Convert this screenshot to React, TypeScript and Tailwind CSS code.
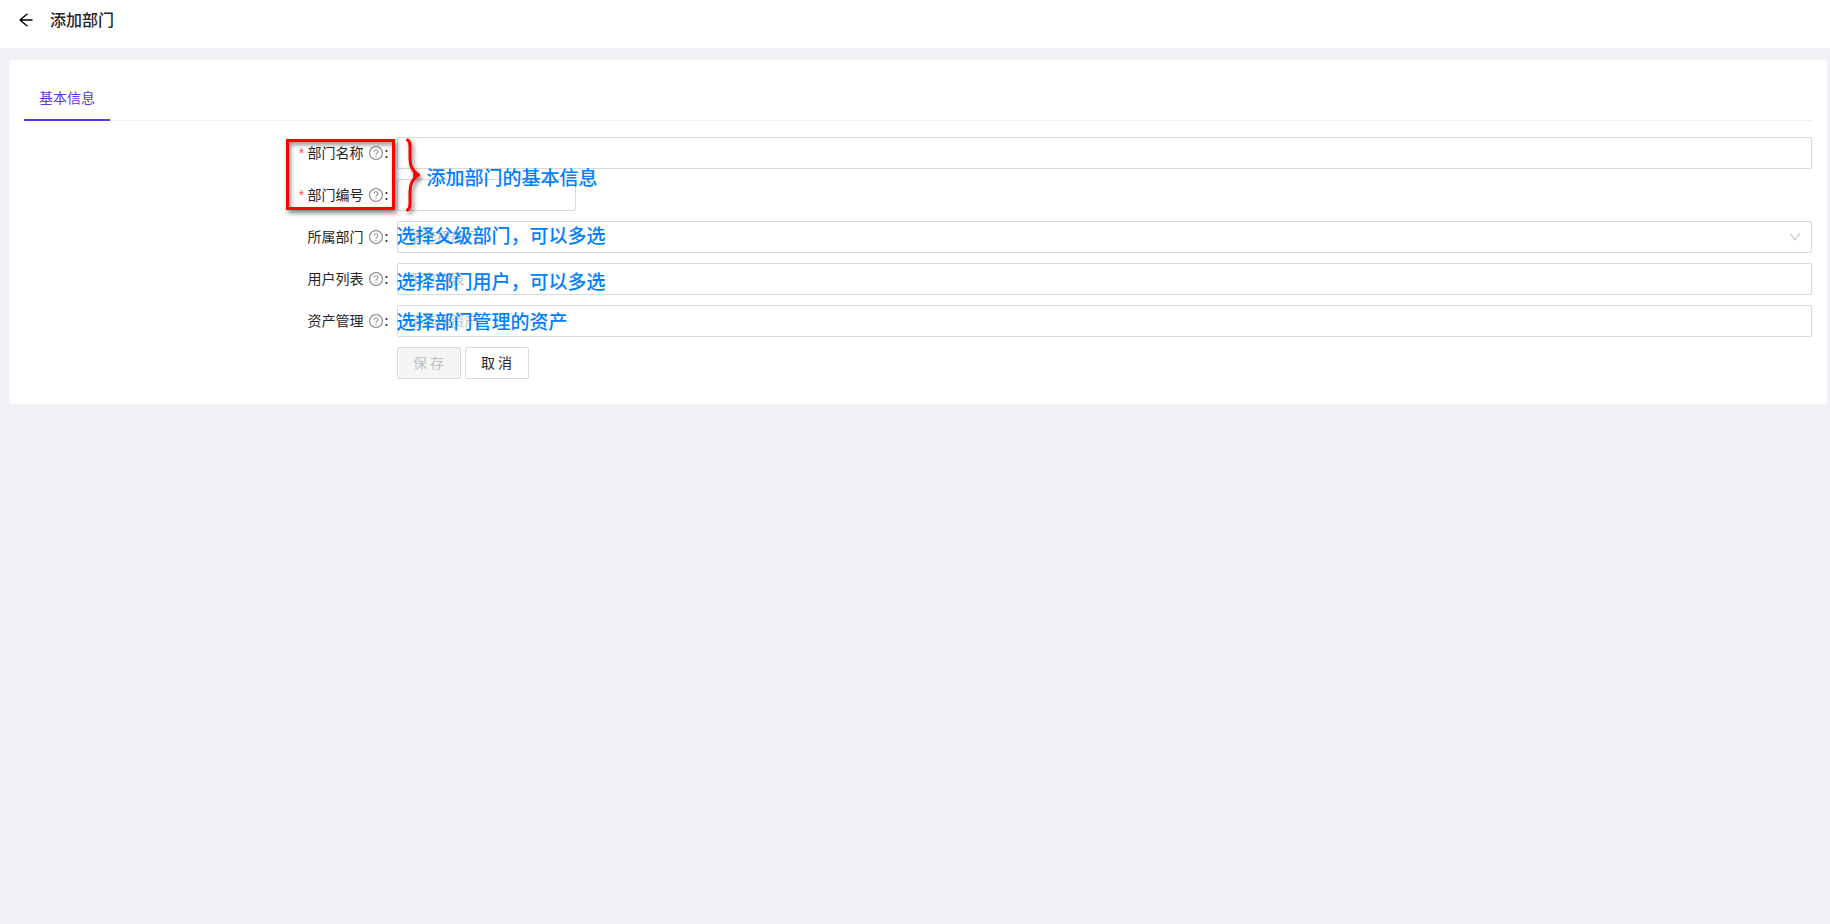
import type { ReactNode } from "react";

const HelpIcon = () => (
  <svg className="size-3.5 text-[#8c8c8c]" viewBox="64 64 896 896" fill="currentColor" aria-hidden="true">
    <path d="M512 64C264.600 64 64 264.600 64 512s200.600 448 448 448 448-200.600 448-448S759.400 64 512 64zm0 820c-205.400 0-372-166.600-372-372s166.600-372 372-372 372 166.600 372 372-166.600 372-372 372z" />
    <path d="M623.600 316.700C593.600 290.400 554 276 512 276s-81.600 14.500-111.600 40.700C369.200 344 352 380.700 352 420v7.600c0 4.400 3.600 8 8 8h48c4.400 0 8-3.600 8-8V420c0-44.100 43.100-80 96-80s96 35.900 96 80c0 31.100-22 59.600-56.100 72.700-21.200 8.100-39.200 22.300-52.100 40.900-13.100 19-19.900 41.800-19.900 64.900V620c0 4.400 3.600 8 8 8h48c4.400 0 8-3.600 8-8v-22.700a48.300 48.300 0 0130.900-44.800c59-22.700 97.100-74.700 97.100-132.500.1-39.300-17.100-76-48.300-103.300zM472 732a40 40 0 1080 0 40 40 0 10-80 0z" />
  </svg>
);

const BackIcon = () => (
  <svg className="size-4" viewBox="64 64 896 896" fill="currentColor" aria-hidden="true">
    <path d="M872 474H286.900l350.200-304c5.600-4.900 2.200-14-5.200-14h-88.500c-3.900 0-7.600 1.400-10.500 3.900L155 487.800a31.960 31.960 0 000 48.300L535.100 866c1.500 1.300 3.300 2 5.200 2h91.500c7.400 0 10.800-9.200 5.200-14L286.900 550H872c4.400 0 8-3.600 8-8v-60c0-4.400-3.600-8-8-8z" />
  </svg>
);

const DownIcon = () => (
  <svg
    className="pointer-events-none absolute right-[11px] top-[10px] size-3 text-[#bfbfbf]"
    viewBox="64 64 896 896"
    fill="currentColor"
    aria-hidden="true"
  >
    <path d="M884 256h-75c-5.100 0-9.900 2.500-12.900 6.600L512 654.200 227.900 262.600c-3-4.100-7.800-6.600-12.900-6.600h-75c-6.500 0-10.300 7.400-6.500 12.700l352.600 486.100c12.800 17.600 39 17.600 51.700 0l352.600-486.100c3.900-5.300.1-12.700-6.400-12.700z" />
  </svg>
);

const Brace = () => (
  <svg
    className="absolute left-2 top-0 h-20 w-6 drop-shadow-[2px_3px_2px_rgba(0,0,0,0.5)]"
    viewBox="0 0 24 80"
    fill="none"
    stroke="#ff0000"
    strokeWidth="3"
    strokeLinecap="round"
    strokeLinejoin="round"
    aria-hidden="true"
  >
    <path d="M2.500 3c3 1 2.500 5 2.500 10v8c0 8 2 12 8 17" />
    <path d="M2.500 73c3-1 2.500-5 2.500-10v-8c0-8 2-12 8-17" />
    <path d="M9 34l6 4-6 4z" fill="#ff0000" strokeWidth="1" />
  </svg>
);

const Note = ({ className, children }: { className: string; children: ReactNode }) => (
  <span
    className={`pointer-events-none absolute whitespace-nowrap text-[19px] font-medium leading-6 text-[#0080ff] ${className}`}
  >
    {children}
  </span>
);

type FieldProps = {
  id: string;
  label: string;
  required?: boolean;
  children: ReactNode;
};

const Field = ({ id, label, required, children }: FieldProps) => (
  <div className="grid grid-cols-[5fr_19fr]">
    <div className="flex h-8 items-center justify-end pr-2">
      {required && (
        <span className="mr-0.5 pt-1 font-['Liberation_Mono',monospace] text-sm leading-none text-[#ff4d4f]">*</span>
      )}
      <label htmlFor={id} className="pb-0.5">
        {label}
      </label>
      <span className="ml-[5px] mr-0.5">
        <HelpIcon />
      </span>
      <span className="pb-0.5">:</span>
    </div>
    <div className="relative">{children}</div>
  </div>
);

const inputClass =
  "block h-8 rounded-xs border border-[#d9d9d9] bg-white px-[11px] pb-0.5 text-sm outline-none placeholder:text-[#bfbfbf]";

const App = () => {
  return (
    <div className="min-h-screen bg-[#f0f1f5] font-['Noto_Sans_CJK_SC',sans-serif] text-sm text-[#262626]">
      <header className="flex h-12 items-center bg-white pb-2 pl-[18px]">
        <button type="button" aria-label="返回" className="text-black">
          <BackIcon />
        </button>
        <h1 className="ml-4 pb-0.5 text-base font-medium">添加部门</h1>
      </header>

      <main className="ml-[9px] mr-[3px] mt-3 bg-white px-[15px] pb-[25px] pt-4">
        <div role="tablist" className="flex border-b border-[#f0f0f0]">
          <button
            type="button"
            role="tab"
            aria-selected="true"
            className="-mb-px h-[45px] border-b-2 border-[#5b34eb] px-[15px] pb-0.5 text-[#5b34eb]"
          >
            基本信息
          </button>
        </div>

        <form className="mt-4 flex flex-col gap-2.5" onSubmit={(e) => e.preventDefault()}>
          <Field id="name" label="部门名称" required>
            <input id="name" type="text" className={`${inputClass} w-full`} />
            {/* Callout around the two required labels */}
            <div className="pointer-events-none absolute right-full top-0.5 z-10 mr-0.5 h-[71px] w-[109px] border-3 border-[#ff0000] shadow-[2px_3px_5px_rgba(0,0,0,0.5),inset_2px_3px_4px_rgba(0,0,0,0.4)]" />
            <div className="absolute left-0 top-0 z-10">
              <Brace />
              <Note className="left-[30px] top-7">添加部门的基本信息</Note>
            </div>
          </Field>

          <Field id="code" label="部门编号" required>
            <input id="code" type="text" className={`${inputClass} w-[179px]`} />
          </Field>

          <Field id="parent" label="所属部门">
            <select id="parent" defaultValue="" className={`${inputClass} w-full appearance-none text-[#bfbfbf]`}>
              <option value="">请选择部门</option>
            </select>
            <DownIcon />
            <Note className="left-0 top-0.5">选择父级部门，可以多选</Note>
          </Field>

          <Field id="users" label="用户列表">
            <input id="users" type="text" placeholder="用户列表" className={`${inputClass} w-full`} />
            <Note className="left-0 top-1.5">选择部门用户，可以多选</Note>
          </Field>

          <Field id="assets" label="资产管理">
            <input id="assets" type="text" placeholder="请选择资产" className={`${inputClass} w-full`} />
            <Note className="left-0 top-1">选择部门管理的资产</Note>
          </Field>

          <div className="grid grid-cols-[5fr_19fr]">
            <div className="col-start-2 flex gap-1">
              <button
                type="submit"
                disabled
                className="h-8 w-16 rounded-xs border border-[#d9d9d9] bg-[#f5f5f5] pb-0.5 text-[#bfbfbf]"
              >
                保 存
              </button>
              <button type="button" className="h-8 w-16 rounded-xs border border-[#d9d9d9] bg-white pb-0.5">
                取 消
              </button>
            </div>
          </div>
        </form>
      </main>
    </div>
  );
};

export default App;
